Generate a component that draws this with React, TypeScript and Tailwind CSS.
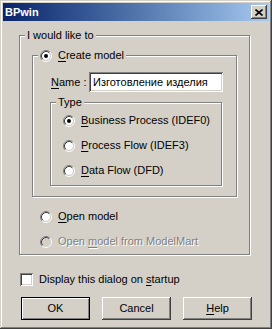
import React from "react";

const raised =
  "shadow-[inset_-1px_-1px_0_#404040,inset_1px_1px_0_#fff,inset_-2px_-2px_0_#808080]";
const sunken =
  "shadow-[inset_1px_1px_0_#808080,inset_-1px_-1px_0_#fff,inset_2px_2px_0_#404040,inset_-2px_-2px_0_#d4d0c8]";
const etched = "border border-[#808080] shadow-[inset_1px_1px_0_#fff,1px_1px_0_#fff]";

function Radio({ checked = false, disabled = false }: { checked?: boolean; disabled?: boolean }) {
  return (
    <svg width="12" height="12" viewBox="0 0 12 12" className="shrink-0">
      <circle cx="6" cy="6" r="4" fill={disabled ? "#d4d0c8" : "#fff"} />
      <path d="M2.11 9.89A5.5 5.5 0 0 1 9.89 2.11" stroke="#808080" fill="none" />
      <path d="M9.89 2.11A5.5 5.5 0 0 1 2.11 9.89" stroke="#fff" fill="none" />
      <path d="M2.82 9.18A4.5 4.5 0 0 1 9.18 2.82" stroke="#404040" fill="none" />
      <path d="M9.18 2.82A4.5 4.5 0 0 1 2.82 9.18" stroke="#d4d0c8" fill="none" />
      {checked && <circle cx="6" cy="6" r="2" fill="#000" />}
    </svg>
  );
}

function Option({
  children,
  checked,
  disabled,
}: {
  children: React.ReactNode;
  checked?: boolean;
  disabled?: boolean;
}) {
  return (
    <div className="flex items-center gap-[6px] h-[13px]">
      <Radio checked={checked} disabled={disabled} />
      <span
        className={disabled ? "text-[#808080] [text-shadow:1px_1px_0_#fff]" : ""}
      >
        {children}
      </span>
    </div>
  );
}

const U = ({ children }: { children: React.ReactNode }) => (
  <span className="underline underline-offset-[2px]">{children}</span>
);

export default function App() {
  return (
    <div className="w-[272px] h-[329px] bg-[#d4d0c8] p-[3px] flex flex-col text-[11px] leading-[13px] text-black font-['Liberation_Sans',Arial,sans-serif] shadow-[inset_-1px_-1px_0_#404040,inset_1px_1px_0_#d4d0c8,inset_-2px_-2px_0_#808080,inset_2px_2px_0_#fff]">
      {/* Title bar */}
      <div className="h-[18px] shrink-0 flex items-center justify-between pl-[2px] pr-[2px] bg-linear-to-r from-[#0a246a] to-[#a6caf0]">
        <span className="font-bold text-white">BPwin</span>
        <div className={`w-[16px] h-[14px] bg-[#d4d0c8] flex items-center justify-center ${raised}`}>
          <svg width="8" height="7" viewBox="0 0 8 7">
            <path d="M0.5 0.5L7.5 6.5M7.5 0.5L0.5 6.5" stroke="#000" strokeWidth="1.6" />
          </svg>
        </div>
      </div>

      {/* Body */}
      <div className="flex flex-col pl-[16px] pt-[14px]">
        <div className={`relative w-[231px] h-[220px] flex flex-col ${etched}`}>
          <span className="absolute left-[5px] top-[-7px] px-[2px] bg-[#d4d0c8]">I would like to</span>

          {/* Create model */}
          <div className={`relative ml-[12px] mt-[19px] w-[205px] h-[142px] flex flex-col ${etched}`}>
            <div className="absolute left-[5px] top-[-7px] px-[2px] bg-[#d4d0c8]">
              <Option checked>
                <U>C</U>reate model
              </Option>
            </div>

            <div className="flex items-center mt-[16px] ml-[18px]">
              <span className="w-[38px]">
                <U>N</U>ame :
              </span>
              <div className={`w-[134px] h-[20px] bg-white flex items-center pl-[4px] ${sunken}`}>
                Изготовление изделия
              </div>
            </div>

            <div className={`relative mt-[10px] ml-[17px] w-[172px] h-[84px] flex flex-col ${etched}`}>
              <span className="absolute left-[5px] top-[-7px] px-[2px] bg-[#d4d0c8]">Type</span>
              <div className="flex flex-col gap-[12px] mt-[11px] ml-[12px]">
                <Option checked>
                  <U>B</U>usiness Process (IDEF0)
                </Option>
                <Option>
                  <U>P</U>rocess Flow (IDEF3)
                </Option>
                <Option>
                  <U>D</U>ata Flow (DFD)
                </Option>
              </div>
            </div>
          </div>

          <div className="flex flex-col gap-[12px] mt-[13px] ml-[20px]">
            <Option>
              <U>O</U>pen model
            </Option>
            <Option disabled>
              Open <U>m</U>odel from ModelMart
            </Option>
          </div>
        </div>

        {/* Startup checkbox */}
        <div className="flex items-center gap-[6px] mt-[18px] ml-[1px] h-[13px]">
          <div className={`w-[13px] h-[13px] bg-white ${sunken}`} />
          <span>
            Display this dialog on <U>s</U>tartup
          </span>
        </div>

        {/* Buttons */}
        <div className="flex gap-[12px] mt-[11px] ml-[2px]">
          <button className="w-[69px] h-[23px] bg-[#d4d0c8] border border-black shadow-[inset_1px_1px_0_#fff,inset_-1px_-1px_0_#808080]">
            OK
          </button>
          <button className={`w-[69px] h-[23px] bg-[#d4d0c8] ${raised}`}>Cancel</button>
          <button className={`w-[69px] h-[23px] bg-[#d4d0c8] ${raised}`}>
            <U>H</U>elp
          </button>
        </div>
      </div>
    </div>
  );
}
